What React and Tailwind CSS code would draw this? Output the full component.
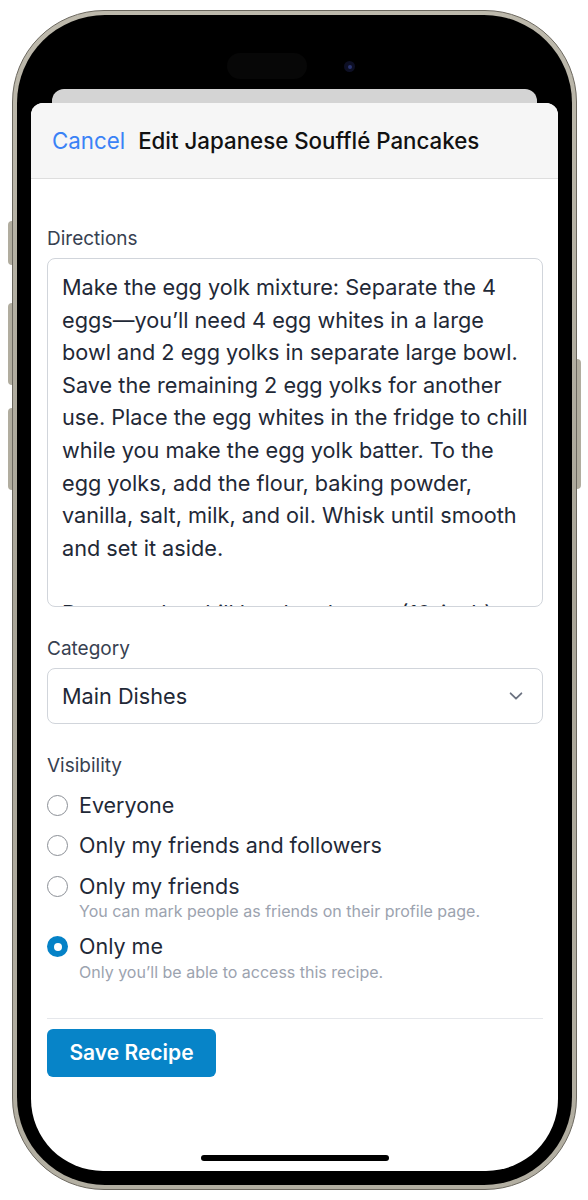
import React, { useState } from "react";

const directions = [
  "Make the egg yolk mixture: Separate the 4",
  "eggs\u2014you\u2019ll need 4 egg whites in a large",
  "bowl and 2 egg yolks in separate large bowl.",
  "Save the remaining 2 egg yolks for another",
  "use. Place the egg whites in the fridge to chill",
  "while you make the egg yolk batter. To the",
  "egg yolks, add the flour, baking powder,",
  "vanilla, salt, milk, and oil. Whisk until smooth",
  "and set it aside.",
  "\u00a0",
  "Dust out the chill bowl and use a (10-inch)",
];

const options = [
  { id: "everyone", label: "Everyone" },
  { id: "followers", label: "Only my friends and followers" },
  {
    id: "friends",
    label: "Only my friends",
    hint: "You can mark people as friends on their profile page.",
  },
  {
    id: "me",
    label: "Only me",
    hint: "Only you\u2019ll be able to access this recipe.",
  },
];

function Radio({ checked }) {
  if (checked) {
    return (
      <span className="flex h-[21px] w-[21px] shrink-0 items-center justify-center rounded-full bg-[#0582c7]">
        <span className="h-[8px] w-[8px] rounded-full bg-white" />
      </span>
    );
  }
  return (
    <span className="h-[21px] w-[21px] shrink-0 rounded-full border-[1.5px] border-[#8b8f96] bg-white" />
  );
}

export default function App() {
  const [visibility, setVisibility] = useState("me");

  return (
    <div
      className="relative h-[1200px] w-[588px] overflow-hidden bg-white pl-[12px] pt-[10px]"
      style={{ fontFamily: "Inter, 'Noto Sans', sans-serif" }}
    >
      {/* Phone frame */}
      <div className="relative h-[1180px] w-[565px] rounded-[92px] border border-[#6c685f] bg-gradient-to-b from-[#bdb9ac] via-[#a8a497] to-[#b3afa2] p-[4px]">
        {/* side buttons */}
        <span className="absolute -left-[5px] top-[210px] h-[44px] w-[4px] rounded-l-sm bg-[#b1ad9f]" />
        <span className="absolute -left-[5px] top-[292px] h-[82px] w-[4px] rounded-l-sm bg-[#b1ad9f]" />
        <span className="absolute -left-[5px] top-[397px] h-[82px] w-[4px] rounded-l-sm bg-[#b1ad9f]" />
        <span className="absolute -right-[5px] top-[348px] h-[130px] w-[4px] rounded-r-sm bg-[#b1ad9f]" />

        <div className="h-full w-full rounded-[88px] bg-black p-[14px]">
          <div className="flex h-full w-full flex-col overflow-hidden rounded-[72px] bg-black">
            {/* status / island area */}
            <div className="flex h-[60px] shrink-0 items-start pl-[196px] pt-[24px]">
              <div className="h-[26px] w-[80px] rounded-full bg-[#070707]" />
              <div className="ml-[37px] mt-[8px] flex h-[11px] w-[11px] items-center justify-center rounded-full bg-[#0d0f24]">
                <span className="h-[4px] w-[4px] rounded-full bg-[#2a3470]" />
              </div>
            </div>

            {/* back sheet */}
            <div className="mx-[21px] h-[14px] shrink-0 rounded-t-[12px] bg-[#d4d4d4]" />

            {/* front sheet */}
            <div className="flex flex-1 flex-col rounded-t-[12px] bg-white">
              <div className="flex h-[76px] shrink-0 items-center gap-[13px] rounded-t-[12px] border-b border-[#dedede] bg-[#f6f6f6] pl-[21px]">
                <span className="text-[22.3px] text-[#3a82f6]">Cancel</span>
                <span className="text-[22.3px] font-medium text-[#111111]">
                  Edit Japanese Soufflé Pancakes
                </span>
              </div>

              <div className="pl-[16px] pr-[15px] pt-[47px]">
                <label className="block text-[19px] leading-[26px] text-[#374151]">
                  Directions
                </label>
                <div className="mt-[6px] h-[349px] overflow-hidden rounded-[8px] border border-[#d1d5db] bg-white px-[14px] pt-[12px] text-[21.7px] leading-[32.6px] text-[#1f2937]">
                  {directions.map((line, i) => (
                    <div key={i} className="whitespace-nowrap">
                      {line}
                    </div>
                  ))}
                </div>

                <label className="mt-[29px] block text-[19px] leading-[26px] text-[#374151]">
                  Category
                </label>
                <div className="mt-[6px] flex h-[56px] items-center justify-between rounded-[8px] border border-[#d1d5db] bg-white pl-[14px] pr-[17px] text-[21.7px] text-[#1f2937]">
                  <span>Main Dishes</span>
                  <svg
                    width="18"
                    height="18"
                    viewBox="0 0 20 20"
                    fill="none"
                    stroke="#6b7280"
                    strokeWidth="2"
                    strokeLinecap="round"
                    strokeLinejoin="round"
                  >
                    <path d="M4 7l6 6 6-6" />
                  </svg>
                </div>

                <label className="mt-[29px] block text-[19px] leading-[26px] text-[#374151]">
                  Visibility
                </label>
                <div className="mt-[11px] flex flex-col gap-[10.5px]">
                  {options.map((o) => (
                    <div key={o.id} onClick={() => setVisibility(o.id)}>
                      <div className="flex h-[30px] items-center gap-[11px]">
                        <Radio checked={visibility === o.id} />
                        <span className="text-[21.5px] text-[#1f2937]">
                          {o.label}
                        </span>
                      </div>
                      {o.hint && (
                        <div className="pl-[32px] text-[16px] leading-[20px] text-[#9ca3af]">
                          {o.hint}
                        </div>
                      )}
                    </div>
                  ))}
                </div>

                <div className="mt-[36px] border-t border-[#e5e7eb] pt-[10px]">
                  <button className="h-[48px] w-[169px] rounded-[6px] bg-[#0784c8] text-[21px] font-semibold text-white">
                    Save Recipe
                  </button>
                </div>
              </div>

              <div className="mx-auto mb-[10px] mt-auto h-[6px] w-[188px] rounded-full bg-black" />
            </div>
          </div>
        </div>
      </div>
    </div>
  );
}
